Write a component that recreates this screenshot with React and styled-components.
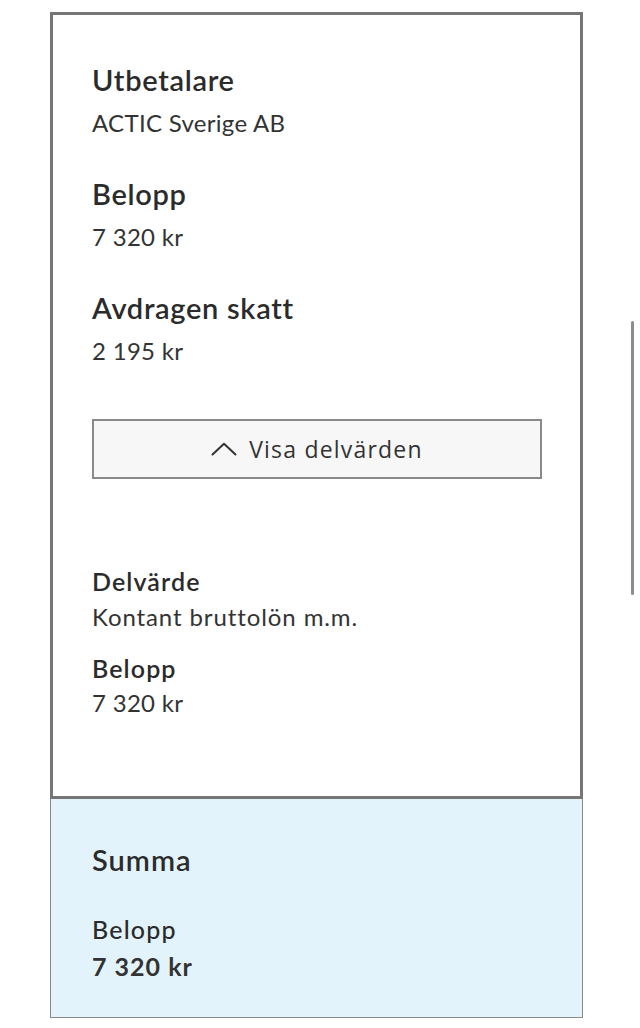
import React from "react";
import styled, { createGlobalStyle } from "styled-components";

const GlobalStyle = createGlobalStyle`
  html, body { margin: 0; padding: 0; background: #ffffff; }
  body { font-family: Lato, "Liberation Sans", sans-serif; color: #2e2e2e; }
  * { box-sizing: border-box; }
`;

const Page = styled.div`
  position: relative;
  width: 640px;
  min-height: 1028px;
  padding: 12px 0 0 50px;
`;

const Card = styled.div`
  width: 533px;
  display: flex;
  flex-direction: column;
`;

const Details = styled.section`
  border: 3px solid #767676;
  background: #ffffff;
  padding: 47px 38px 78px 39px;
  display: flex;
  flex-direction: column;
`;

const Field = styled.div`
  display: flex;
  flex-direction: column;
  gap: ${(p) => p.$gap ?? 10}px;
  margin-top: ${(p) => p.$top ?? 0}px;
`;

const Heading = styled.div`
  font-size: ${(p) => p.$size ?? 29}px;
  line-height: ${(p) => p.$lh ?? 36}px;
  font-weight: ${(p) => p.$weight ?? 600};
  letter-spacing: ${(p) => p.$ls ?? 0.7}px;
  color: #2b2b2b;
`;

const Value = styled.div`
  font-size: ${(p) => (p.$bold ? 25 : 24)}px;
  line-height: 30px;
  font-weight: ${(p) => (p.$bold ? 700 : 400)};
  letter-spacing: ${(p) => p.$ls ?? 0.3}px;
  color: #333333;
`;

const ToggleButton = styled.button`
  margin-top: 53px;
  height: 60px;
  width: 100%;
  border: 2px solid #8a8a8a;
  background: #f7f7f7;
  display: flex;
  align-items: center;
  justify-content: center;
  gap: 12px;
  font-family: "Open Sans", "Noto Sans", sans-serif;
  font-size: 23px;
  letter-spacing: 1.2px;
  color: #333333;
  cursor: pointer;
  padding: 0;
`;

const ButtonLabel = styled.span`
  line-height: 30px;
`;

const SubGroup = styled.div`
  margin-top: 87px;
  display: flex;
  flex-direction: column;
`;

const Summary = styled.section`
  background: #e3f3fc;
  border: 1px solid #8a8a8a;
  border-top: none;
  padding: 44px 38px 36px 41px;
  display: flex;
  flex-direction: column;
`;

const ScrollIndicator = styled.div`
  position: absolute;
  left: 631px;
  top: 321px;
  width: 3px;
  height: 274px;
  border-radius: 2px;
  background: #8c8c8c;
`;

const ChevronUp = () => (
  <svg width="26" height="14" viewBox="0 0 26 14" fill="none">
    <polyline
      points="1.5,12.5 13,1.8 24.5,12.5"
      stroke="#333"
      strokeWidth="2"
      strokeLinecap="round"
      strokeLinejoin="round"
    />
  </svg>
);

export default function App() {
  return (
    <>
      <GlobalStyle />
      <Page>
        <Card>
          <Details>
            <Field>
              <Heading>Utbetalare</Heading>
              <Value>ACTIC Sverige AB</Value>
            </Field>
            <Field $top={38}>
              <Heading>Belopp</Heading>
              <Value>7 320 kr</Value>
            </Field>
            <Field $top={38}>
              <Heading>Avdragen skatt</Heading>
              <Value>2 195 kr</Value>
            </Field>
            <ToggleButton type="button">
              <ChevronUp />
              <ButtonLabel>Visa delvärden</ButtonLabel>
            </ToggleButton>
            <SubGroup>
              <Field $gap={6}>
                <Heading $size={25} $lh={30} $ls={1.1}>Delvärde</Heading>
                <Value $ls={0.9}>Kontant bruttolön m.m.</Value>
              </Field>
              <Field $gap={5} $top={21}>
                <Heading $size={25} $lh={30} $ls={1.1}>Belopp</Heading>
                <Value>7 320 kr</Value>
              </Field>
            </SubGroup>
          </Details>
          <Summary>
            <Heading $size={29} $lh={34} $ls={1}>Summa</Heading>
            <Field $gap={7} $top={37}>
              <Heading $size={25} $lh={30} $weight={500} $ls={1.2}>Belopp</Heading>
              <Value $bold $ls={1}>7 320 kr</Value>
            </Field>
          </Summary>
        </Card>
        <ScrollIndicator />
      </Page>
    </>
  );
}
